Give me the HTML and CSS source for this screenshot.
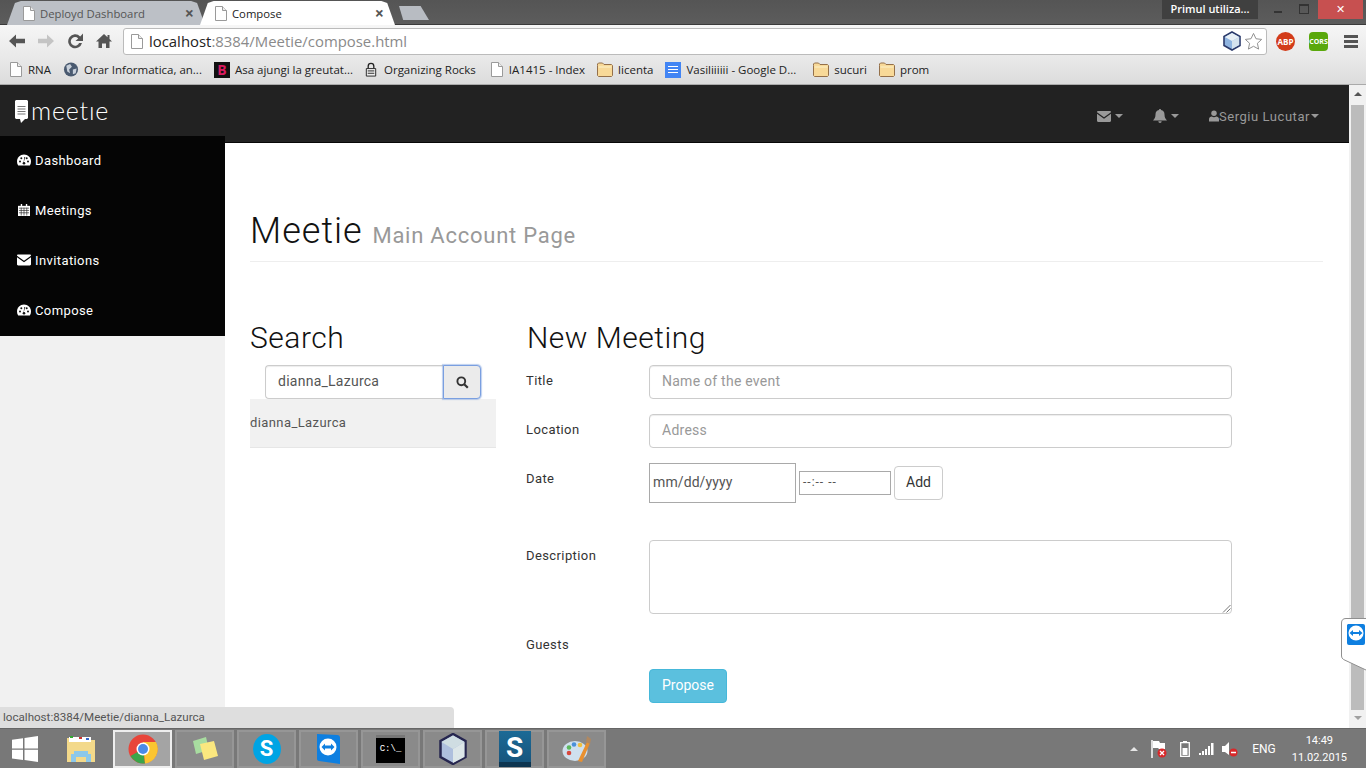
FILE: index.html
```html
<!DOCTYPE html>
<html lang="en">

<head>
    <meta charset="UTF-8">
    <title>Compose</title>
    <link rel="stylesheet" href="styles.css">
</head>

<body>
    <svg class="defs" width="0" height="0">
        <symbol id="page" viewBox="0 0 12 15">
            <path d="M.5.5h7l4 4v10H.5z" fill="#fff" stroke="#9a9a9a" />
            <path d="M7.5.5v4h4" fill="#eee" stroke="#9a9a9a" />
        </symbol>
        <symbol id="folder" viewBox="0 0 16 14">
            <path d="M.5 3V1.500l1-1h4l1.500 1.500h7.500l1 1v10l-1 1h-13l-1-1z" fill="#f8d998" stroke="#94704a" />
            <path d="M1.500 4h13v1h-13z" fill="#fdf0c8" />
        </symbol>
        <symbol id="dash" viewBox="0 0 14 12">
            <path d="M7 .5C3.100.5 0 3.600 0 7.500c0 1.500.4 2.900 1.200 4h11.600c.8-1.100 1.200-2.500 1.200-4C14 3.600 10.900.5 7 .5z" fill="#fff" />
            <g fill="#111">
                <circle cx="3" cy="7.500" r="1" />
                <circle cx="4.300" cy="4.300" r="1" />
                <circle cx="9.700" cy="4.300" r="1" />
                <circle cx="11" cy="7.500" r="1" />
                <circle cx="7" cy="9.200" r="1.300" />
                <path d="M6.500 9 7.300 3h1z" />
            </g>
        </symbol>
        <symbol id="cal" viewBox="0 0 13 13">
            <path d="M0 2h13v11H0z" fill="#fff" />
            <path d="M3 0h1.500v3H3zm5.500 0H10v3H8.500z" fill="#fff" />
            <path d="M1 4.500h11M1 7h11M1 9.500h11M3.500 4v8.500M6.500 4v8.500M9.500 4v8.500" stroke="#222" stroke-width=".7" />
        </symbol>
        <symbol id="mail" viewBox="0 0 14 11">
            <path d="M0 1.200C0 .5.500 0 1.200 0h11.600c.7 0 1.200.5 1.200 1.200L7 6.200z" />
            <path d="M0 2.800 7 7.700l7-4.900v7c0 .7-.5 1.200-1.200 1.200H1.200C.5 11 0 10.500 0 9.800z" />
        </symbol>
    </svg>

    <header class="chrome">
        <div class="tabstrip">
            <div class="tab tab-off">
                <svg class="fav"><use href="#page" /></svg>
                <span class="tab-title">Deployd Dashboard</span>
                <span class="tab-x">×</span>
            </div>
            <div class="tab tab-on">
                <svg class="fav"><use href="#page" /></svg>
                <span class="tab-title">Compose</span>
                <span class="tab-x">×</span>
            </div>
            <div class="new-tab"></div>
            <div class="win-user">Primul utiliza...</div>
            <div class="win-btns">
                <span class="win-min"></span>
                <span class="win-max"></span>
                <span class="win-close">✕</span>
            </div>
        </div>

        <div class="toolbar">
            <svg class="tool" viewBox="0 0 16 16"><path d="M0 8l7-6.500v4.300h9v4.400H7v4.300z" fill="#555" /></svg>
            <svg class="tool" viewBox="0 0 16 16"><path d="M16 8 9 1.500v4.300H0v4.400h9v4.300z" fill="#c4c4c4" /></svg>
            <svg class="tool" viewBox="0 0 16 16"><path d="M13.200 3.400A7 7 0 1 0 15 10h-2.900A4.300 4.300 0 1 1 11.200 5.400L8.500 8H16V.5z" fill="#555" /></svg>
            <svg class="tool" viewBox="0 0 16 16"><path d="M8 1 0 8.500h2.500V15H6v-4.500h4V15h3.500V8.500H16l-2.500-2.400V2h-2v2.200z" fill="#555" /></svg>
            <div class="omnibox">
                <svg class="fav"><use href="#page" /></svg>
                <span class="url"><b>localhost</b>:8384/Meetie/compose.html</span>
                <svg class="omni-cube" viewBox="0 0 20 20">
                    <path d="M10 1l8 4.500v9L10 19l-8-4.500v-9z" fill="#8fb4e0" stroke="#2b3a6b" stroke-width="1.600" />
                    <path d="M10 10l7.200-4v8l-7.200 4z" fill="#d4e2ee" />
                    <path d="M10 10 2.800 6 10 2l7.200 4z" fill="#e8f0f6" />
                </svg>
                <svg class="omni-star" viewBox="0 0 20 20"><path d="M10 1.500l2.600 5.600 6 .7-4.500 4.100 1.300 6.100L10 15l-5.400 3 1.300-6.100L1.400 7.800l6-.7z" fill="#fff" stroke="#8c8c8c" /></svg>
            </div>
            <div class="ext ext-abp">ABP</div>
            <div class="ext ext-cors">CORS</div>
            <div class="burger"><i></i><i></i><i></i></div>
        </div>

        <div class="bookmarks">
            <a class="bm"><svg class="fav"><use href="#page" /></svg>RNA</a>
            <a class="bm"><svg class="fav fav-16" viewBox="0 0 16 16"><circle cx="8" cy="8" r="7.500" fill="#4a5a70" /><path d="M3 4l4-2 2 3-3 3 1 4-3-2zM10 8l4-1-1 5-3 1z" fill="#c8d0da" /></svg>Orar Informatica, an...</a>
            <a class="bm"><span class="fav-b">B</span>Asa ajungi la greutat...</a>
            <a class="bm"><svg class="fav fav-lock" viewBox="0 0 12 16"><path d="M3 7V4.500a3 3 0 0 1 6 0V7" fill="none" stroke="#222" stroke-width="1.400" /><path d="M1 7h10v8H1z" fill="#eee" stroke="#222" /><path d="M2.500 9.500h7M2.500 12h7" stroke="#222" /></svg>Organizing Rocks</a>
            <a class="bm bm-index"><svg class="fav"><use href="#page" /></svg>IA1415 - Index</a>
            <a class="bm"><svg class="fav fav-16"><use href="#folder" /></svg>licenta</a>
            <a class="bm"><span class="fav-doc"><i></i><i></i><i></i></span>Vasiliiiiii - Google D...</a>
            <a class="bm bm-wide"><svg class="fav fav-16"><use href="#folder" /></svg>sucuri</a>
            <a class="bm"><svg class="fav fav-16"><use href="#folder" /></svg>prom</a>
        </div>
    </header>

    <div class="viewport">
        <div class="page">
            <nav class="navbar">
                <div class="brand">
                    <svg class="brand-icon" viewBox="0 0 13 23">
                        <path d="M1 0h11l1 1v17l-1 1H10l-4 4-1-4H1l-1-1V1z" fill="#fff" />
                        <path d="M2.500 6h8v1h-8zm0 2.500h8v1h-8zm0 2.500h8v1h-8zm0 2.500h8v1h-8z" fill="#777" />
                    </svg>
                    <span>meetıe</span>
                </div>
                <div class="nav-links">
                    <a class="nav-link">
                        <svg class="nav-icon"><use href="#mail" /></svg><span class="caret"></span>
                    </a>
                    <a class="nav-link">
                        <svg class="nav-icon nav-icon-bell" viewBox="0 0 14 14"><path d="M7 0c.6 0 1 .4 1 1 2.300.4 3.500 2 3.500 4.500 0 3 1 4.500 2.500 6H0c1.500-1.500 2.500-3 2.500-6C2.500 3 3.700 1.400 6 1c0-.6.4-1 1-1zM5.300 12.300h3.400a1.700 1.700 0 0 1-3.400 0z" /></svg><span class="caret"></span>
                    </a>
                    <a class="nav-link">
                        <svg class="nav-icon nav-icon-user" viewBox="0 0 11 12"><circle cx="5.500" cy="3" r="3" /><path d="M0 12V9.500C0 7.500 1.500 6.500 3 6.500c1.500 1 3.500 1 5 0 1.500 0 3 1 3 3V12z" /></svg>Sergiu Lucutar<span class="caret caret-near"></span>
                    </a>
                </div>
            </nav>

            <div class="layout">
                <aside class="sidebar">
                    <ul class="side-menu">
                        <li><svg class="side-icon"><use href="#dash" /></svg>Dashboard</li>
                        <li><svg class="side-icon"><use href="#cal" /></svg>Meetings</li>
                        <li><svg class="side-icon side-mail"><use href="#mail" /></svg>Invitations</li>
                        <li><svg class="side-icon"><use href="#dash" /></svg>Compose</li>
                    </ul>
                </aside>

                <main class="content">
                    <div class="page-header">
                        <h1>Meetie <small>Main Account Page</small></h1>
                    </div>

                    <div class="columns">
                        <section class="search-col">
                            <h2>Search</h2>
                            <div class="search-box">
                                <input class="form-control search-input" type="text" value="dianna_Lazurca">
                                <button class="search-btn" type="button">
                                    <svg viewBox="0 0 13 13" width="13" height="13"><circle cx="5.300" cy="5.300" r="3.900" fill="none" stroke="#333" stroke-width="1.900" /><path d="M8.200 8.200l3.600 3.600" stroke="#333" stroke-width="2.200" /></svg>
                                </button>
                            </div>
                            <div class="result">dianna_Lazurca</div>
                        </section>

                        <section class="form-col">
                            <h2>New Meeting</h2>
                            <form>
                                <div class="form-row">
                                    <label>Title</label>
                                    <input class="form-control" type="text" placeholder="Name of the event">
                                </div>
                                <div class="form-row">
                                    <label>Location</label>
                                    <input class="form-control" type="text" placeholder="Adress">
                                </div>
                                <div class="form-row date-row">
                                    <label>Date</label>
                                    <div class="date-box">mm/dd/yyyy</div>
                                    <div class="time-box">--:-- --</div>
                                    <button class="btn btn-add" type="button">Add</button>
                                </div>
                                <div class="form-row">
                                    <label>Description</label>
                                    <div class="textarea-box">
                                        <svg class="grip" viewBox="0 0 9 9"><path d="M1 8.500 8.500 1M4.500 8.500l4-4" stroke="#777" fill="none" /></svg>
                                    </div>
                                </div>
                                <div class="form-row guests-row">
                                    <label>Guests</label>
                                </div>
                                <div class="form-row">
                                    <label></label>
                                    <button class="btn btn-info" type="button">Propose</button>
                                </div>
                            </form>
                        </section>
                    </div>
                </main>
            </div>

            <div class="status-bubble">localhost:8384/Meetie/dianna_Lazurca</div>
        </div>

        <div class="scrollbar">
            <span class="arrow-up"></span>
            <span class="thumb"></span>
            <span class="arrow-down"></span>
        </div>

        <svg class="tv-tab" viewBox="0 0 25 53" width="25" height="53">
            <path d="M25 .5H5Q.5.500.5 5v33q0 2 2 3.500L25 52" fill="#fff" stroke="#8f8f8f" />
            <path d="M7 6h15q2 0 2 2v17q0 2-2 2H8q-2 0-2-2V7z" fill="#0e7fe0" />
            <circle cx="15" cy="15" r="7.500" fill="#fff" />
            <path d="M8.500 15l3.500-3v2h6v-2l3.500 3-3.500 3v-2h-6v2z" fill="#0e7fe0" />
        </svg>
    </div>

    <footer class="taskbar">
        <svg class="start" viewBox="0 0 26 26"><path d="M0 3.700l11-1.500v10.300H0zm12.500-1.700L26 0v12.500H12.500zM0 13.800h11v10.300L0 22.500zm12.500 0H26V26l-13.500-1.900z" fill="#fff" /></svg>
        <div class="task task-plain">
            <svg viewBox="0 0 32 30" width="32" height="30">
                <path d="M2 4h11l2 2h15v22H2z" fill="#f3d98a" />
                <path d="M4 3h22v5H4z" fill="#fff" />
                <path d="M5 2h3v2H5z" fill="#3a3" /><path d="M14 3h3v2h-3z" fill="#c33" /><path d="M21 4h3v2h-3z" fill="#36c" />
                <path d="M9 17h14v3h3v8h-5v-5H11v5H6v-8h3z" fill="#8cc8ea" />
            </svg>
        </div>
        <div class="task task-active">
            <svg viewBox="0 0 30 30" width="30" height="30">
                <circle cx="15" cy="15" r="14.500" fill="#e8453a" />
                <path d="M15 15 2.500 22A14.500 14.500 0 0 0 17 29.400z" fill="#3aa54a" />
                <path d="M15 8h13a14.500 14.500 0 0 1-11 21.400z" fill="#fbc531" />
                <circle cx="15" cy="15" r="6.500" fill="#fff" />
                <circle cx="15" cy="15" r="5" fill="#4a8be8" />
            </svg>
        </div>
        <div class="task">
            <svg viewBox="0 0 30 28" width="30" height="28">
                <path d="M3 6l13-4 3 13-13 4z" fill="#a8dca0" />
                <path d="M10 9l14-3 4 15-14 4z" fill="#fbe77f" />
            </svg>
        </div>
        <div class="task">
            <div class="skype">S</div>
        </div>
        <div class="task">
            <svg viewBox="0 0 26 32" width="26" height="32">
                <path d="M1 1l20 1c2 0 3 1 3 3v26L3 28c-1 0-2-1-2-2z" fill="#0e7fe0" />
                <circle cx="12" cy="14" r="8.500" fill="#fff" />
                <path d="M5.500 14l3.500-3.500v2h6v-2l3.500 3.500-3.500 3.500v-2H9v2z" fill="#0e7fe0" />
            </svg>
        </div>
        <div class="task">
            <div class="cmd"><span>C:\_</span></div>
        </div>
        <div class="task">
            <svg viewBox="0 0 28 32" width="28" height="32">
                <path d="M14 1l12.500 7v16L14 31 1.500 24V8z" fill="#aebfdd" stroke="#26264f" stroke-width="2.500" />
                <path d="M14 16l11.500-7v15L14 30z" fill="#dce6e8" />
                <path d="M14 16 2.500 9 14 2.500 25.500 9z" fill="#cfdde2" />
            </svg>
        </div>
        <div class="task">
            <div class="snagit">S</div>
        </div>
        <div class="task">
            <svg viewBox="0 0 30 30" width="30" height="30">
                <ellipse cx="13" cy="17" rx="12.500" ry="10" fill="#cfe0ee" />
                <circle cx="7" cy="19" r="2.300" fill="#d8483e" />
                <circle cx="7" cy="13.500" r="2.300" fill="#5cb85c" />
                <circle cx="12" cy="10.500" r="2.300" fill="#4a90d9" />
                <circle cx="18" cy="11" r="2.300" fill="#f0c040" />
                <path d="M16 27 25 8l3 1-8 19z" fill="#e89030" />
                <path d="M24 8l1-6 4 3-1 5z" fill="#b08860" />
            </svg>
        </div>

        <div class="tray">
            <span class="tray-up"></span>
            <svg class="tray-flag" viewBox="0 0 16 18" width="16" height="18">
                <path d="M1 0v18" stroke="#fff" stroke-width="1.500" />
                <path d="M2 1h6l1 2h5v6H8L7 8H2z" fill="#fff" />
                <circle cx="11" cy="13" r="4.500" fill="#d8282a" />
                <path d="M9 11l4 4m0-4l-4 4" stroke="#fff" stroke-width="1.300" />
            </svg>
            <svg class="tray-batt" viewBox="0 0 10 16" width="10" height="16">
                <path d="M3 0h4v2H3z" fill="#fff" />
                <path d="M.7 1.700h8.600v13.600H.7z" fill="none" stroke="#fff" stroke-width="1.300" />
                <path d="M2.500 7h5v7h-5z" fill="#fff" />
            </svg>
            <svg class="tray-signal" viewBox="0 0 15 12" width="15" height="12">
                <path d="M0 10h2v2H0zm3-2h2v4H3zm3-2h2v6H6zm3-3h2v9H9zm3-3h2.500v12H12z" fill="#fff" />
            </svg>
            <svg class="tray-sound" viewBox="0 0 16 16" width="16" height="16">
                <path d="M0 5h3l4-4v13l-4-3H0z" fill="#fff" />
                <circle cx="11.500" cy="11.500" r="4" fill="#d8282a" />
                <path d="M9 11.500h5" stroke="#fff" stroke-width="1.500" />
            </svg>
            <span class="tray-lang">ENG</span>
            <div class="clock">
                <span>14:49</span>
                <span>11.02.2015</span>
            </div>
        </div>
    </footer>
</body>

</html>
```

FILE: styles.css
```css
* {
    box-sizing: border-box;
}

html,
body {
    margin: 0;
    height: 100%;
    overflow: hidden;
}

body {
    width: 1366px;
    height: 768px;
    display: flex;
    flex-direction: column;
    font-family: Roboto, sans-serif;
    font-size: 13px;
    letter-spacing: .4px;
    color: #333;
}

.defs {
    position: absolute;
}

/* browser frame */
.chrome {
    height: 85px;
    flex: none;
    font-family: "Open Sans", sans-serif;
    letter-spacing: 0;
}

.tabstrip {
    height: 25px;
    display: flex;
    background: linear-gradient(#555, #5c5c5c);
    border-bottom: 1px solid #3a3a3a;
    padding-left: 7px;
}

.tab {
    width: 198px;
    height: 24px;
    margin-top: 1px;
    margin-right: -5px;
    display: flex;
    align-items: center;
    padding: 0 11px 0 16px;
    font-size: 11.300px;
    clip-path: polygon(0 100%, 4% 8%, 7% 0, 93% 0, 96% 8%, 100% 100%);
}

.tab .fav {
    margin-right: 5px;
}

.tab-off {
    background: #bcc0c6;
    color: #555;
}

.tab-on {
    background: #fff;
    color: #222;
    width: 195px;
    padding-left: 15px;
}

.tab-title {
    flex: 1;
}

.tab-x {
    font-size: 16px;
    font-weight: 700;
    color: #555;
}

.new-tab {
    width: 30px;
    height: 14px;
    margin: 6px 0 0 9px;
    background: #b8bcc2;
    clip-path: polygon(0 0, 72% 0, 100% 100%, 14% 100%);
}

.win-user {
    margin-left: auto;
    width: 96px;
    height: 19px;
    background: #404040;
    color: #fff;
    font-size: 11px;
    font-weight: 600;
    text-align: center;
    line-height: 18px;
}

.win-btns {
    display: flex;
    width: 108px;
    padding-left: 16px;
}

.win-min {
    width: 8px;
    height: 2px;
    margin: 11px 17px 0 0;
    background: #333;
}

.win-max {
    width: 10px;
    height: 10px;
    margin: 4px 9px 0 0;
    border: 1px solid #333;
    border-top-width: 2px;
}

.win-close {
    width: 45px;
    height: 19px;
    background: #c75050;
    color: #fff;
    text-align: center;
    font-size: 11px;
    line-height: 18px;
}

.toolbar {
    height: 32px;
    display: flex;
    align-items: center;
    padding-left: 9px;
    background: linear-gradient(#f6f6f6, #e9e9e9);
}

.tool {
    width: 16px;
    height: 16px;
    margin-right: 13px;
    flex: none;
}

.omnibox {
    width: 1144px;
    height: 27px;
    margin-left: -2px;
    display: flex;
    align-items: center;
    padding: 0 3px 0 7px;
    background: #fff;
    border: 1px solid #bbb;
    border-radius: 3px;
}

.url {
    flex: 1;
    font-size: 14.900px;
    color: #8a8a8a;
}

.url b {
    font-weight: 400;
    color: #222;
}

.omni-cube {
    width: 20px;
    height: 20px;
}

.omni-star {
    width: 19px;
    height: 19px;
    margin-left: 2px;
}

.ext {
    width: 19px;
    height: 19px;
    margin-left: 9px;
    color: #fff;
    font-size: 8px;
    font-weight: 700;
    text-align: center;
    line-height: 19px;
    flex: none;
}

.ext-abp {
    background: #d33c1a;
    border-radius: 50%;
}

.ext-cors {
    background: #5aa80c;
    border-radius: 4px;
    font-size: 7px;
    margin-left: 14px;
}

.burger {
    width: 14px;
    margin-left: 16px;
}

.burger i {
    display: block;
    height: 3px;
    margin: 2px 0;
    background: #555;
}

.bookmarks {
    height: 28px;
    display: flex;
    align-items: center;
    gap: 12px;
    padding: 0 0 2px 10px;
    background: linear-gradient(#e9e9e9, #dcdcdc);
    border-bottom: 1px solid #aaa;
    font-size: 11.500px;
    color: #222;
}

.bm {
    display: flex;
    align-items: center;
    white-space: nowrap;
}

.bm-index {
    margin-left: 3px;
}

.bm-wide {
    margin-left: 5px;
}

.fav {
    width: 12px;
    height: 15px;
    margin-right: 6px;
    flex: none;
}

.fav-16 {
    width: 16px;
    height: 15px;
    margin-right: 5px;
}

.fav-lock {
    margin-right: 7px;
}

.fav-b {
    width: 16px;
    height: 16px;
    margin-right: 5px;
    background: #111;
    color: #d81b60;
    font-size: 14px;
    font-weight: 700;
    text-align: center;
    line-height: 16px;
}

.fav-doc {
    width: 16px;
    height: 16px;
    margin-right: 5px;
    padding: 4px 3px;
    background: #4285f4;
}

.fav-doc i {
    display: block;
    height: 1px;
    margin-bottom: 2px;
    background: #fff;
}

/* page in the viewport */
.viewport {
    position: relative;
    flex: 1;
    display: flex;
    min-height: 0;
}

.page {
    position: relative;
    flex: 1;
    background: #fff;
    overflow: hidden;
}

.navbar {
    height: 58px;
    display: flex;
    justify-content: space-between;
    background: #222;
    border-bottom: 1px solid #080808;
}

.brand {
    display: flex;
    align-items: center;
    height: 49px;
    padding-left: 15px;
    color: #fff;
    font-family: "Lato", sans-serif;
    font-size: 25px;
    font-weight: 300;
    letter-spacing: .8px;
}

.brand-icon {
    width: 13px;
    height: 23px;
    margin-right: 3px;
    margin-top: 3px;
}

.nav-links {
    display: flex;
    padding-right: 30px;
    gap: 30px;
    align-items: center;
    padding-top: 5px;
    color: #999;
    letter-spacing: .55px;
}

.nav-link {
    display: flex;
    align-items: center;
}

.nav-icon {
    width: 14px;
    height: 11px;
    fill: #999;
}

.nav-icon-bell {
    height: 14px;
}

.nav-icon-user {
    width: 10px;
    height: 12px;
}

.caret {
    width: 0;
    height: 0;
    margin-left: 4px;
    border-top: 4px solid #999;
    border-left: 4px solid transparent;
    border-right: 4px solid transparent;
}

.caret-near {
    margin-left: 1px;
}

.layout {
    display: flex;
    height: 585px;
}

.sidebar {
    width: 225px;
    flex: none;
    background: #f1f1f1;
}

.side-menu {
    list-style: none;
    margin: -7px 0 0;
    padding: 0;
    background: #050505;
    color: #fff;
    position: relative;
}

.side-menu li {
    height: 50px;
    display: flex;
    align-items: center;
    padding: 0 0 2px 17px;
}

.side-icon {
    width: 14px;
    height: 12px;
    margin-right: 4px;
    fill: #fff;
}

.content {
    flex: 1;
    padding: 0 26px 0 25px;
}

.page-header {
    height: 119px;
    padding-top: 63px;
    border-bottom: 1px solid #eee;
}

h1 {
    margin: 0;
    font-size: 36px;
    font-weight: 300;
    letter-spacing: 1px;
    line-height: 50px;
    color: #111;
}

h1 small {
    font-size: 22px;
    font-weight: 400;
    letter-spacing: .75px;
    color: #999;
}

h2 {
    margin: 0;
    height: 44px;
    font-size: 30px;
    font-weight: 300;
    letter-spacing: .5px;
    line-height: 34px;
    color: #111;
}

.columns {
    display: flex;
    gap: 31px;
    padding-top: 59px;
}

.search-col {
    width: 246px;
}

.search-box {
    display: flex;
    padding-left: 15px;
    width: 231px;
}

.form-control {
    display: block;
    width: 583px;
    height: 34px;
    padding: 4px 12px 6px;
    font: inherit;
    font-size: 14px;
    letter-spacing: .25px;
    color: #555;
    background: #fff;
    border: 1px solid #ccc;
    border-radius: 4px;
    box-shadow: inset 0 1px 1px rgba(0, 0, 0, .075);
}

.form-control::placeholder {
    color: #999;
}

.search-input {
    width: 178px;
    border-radius: 4px 0 0 4px;
    border-right: 0;
}

.search-btn {
    width: 38px;
    height: 34px;
    padding: 0;
    display: flex;
    align-items: center;
    justify-content: center;
    background: #ebebeb;
    border: 1px solid #7a9fe0;
    border-radius: 0 4px 4px 0;
    box-shadow: 0 0 1px 1px rgba(122, 159, 224, .5);
}

.result {
    height: 49px;
    padding-top: 16px;
    background: #f1f1f1;
    border-bottom: 1px solid #e6e6e6;
    color: #555;
}

.form-col {
    width: 705px;
}

.form-row {
    display: flex;
    margin-bottom: 15px;
}

.form-row label {
    width: 122px;
    margin-left: -1px;
    margin-right: 1px;
    padding-top: 8px;
    flex: none;
}

.date-row {
    align-items: center;
    height: 40px;
    margin-bottom: 37px;
}

.date-row label {
    align-self: flex-start;
}

.date-box {
    width: 147px;
    height: 40px;
    padding-left: 3px;
    border: 1px solid #a9a9a9;
    font-size: 14px;
    letter-spacing: .1px;
    line-height: 36px;
    color: #555;
}

.time-box {
    width: 92px;
    height: 24px;
    margin-left: 3px;
    padding-left: 3px;
    border: 1px solid #a9a9a9;
    font-size: 12px;
    letter-spacing: 1px;
    line-height: 21px;
    color: #555;
}

.btn {
    height: 34px;
    margin-left: 3px;
    padding: 0 0 2px;
    font: inherit;
    font-size: 14px;
    color: #333;
    background: #fff;
    border: 1px solid #ccc;
    border-radius: 4px;
}

.btn-add {
    width: 49px;
}

.btn-info {
    width: 78px;
    margin-left: 0;
    color: #fff;
    background: #5bc0de;
    border-color: #46b8da;
}

.textarea-box {
    position: relative;
    width: 583px;
    height: 74px;
    background: #fff;
    border: 1px solid #ccc;
    border-radius: 4px;
}

.grip {
    position: absolute;
    right: 0;
    bottom: 0;
    width: 9px;
    height: 9px;
}

.guests-row {
    height: 25px;
}

.status-bubble {
    position: absolute;
    left: 0;
    bottom: 0;
    width: 454px;
    height: 21px;
    padding-left: 3px;
    background: #dedede;
    border-radius: 0 4px 0 0;
    font-size: 11.600px;
    letter-spacing: 0;
    line-height: 21px;
    color: #555;
}

/* the TeamViewer tab sits over the scrollbar */
.tv-tab {
    position: absolute;
    right: 0;
    top: 533px;
}

.scrollbar {
    width: 17px;
    flex: none;
    display: flex;
    flex-direction: column;
    align-items: center;
    background: #f1f1f1;
}

.arrow-up {
    margin-top: 7px;
    border-bottom: 4px solid #555;
    border-left: 4px solid transparent;
    border-right: 4px solid transparent;
}

.thumb {
    width: 13px;
    height: 605px;
    margin-top: 9px;
    background: #bcbcbc;
}

.arrow-down {
    margin-top: 6px;
    border-top: 4px solid #a0a0a0;
    border-left: 4px solid transparent;
    border-right: 4px solid transparent;
}

/* windows taskbar */
.taskbar {
    height: 40px;
    flex: none;
    display: flex;
    align-items: center;
    gap: 3px;
    background: #787878;
    border-top: 1px solid #666;
    letter-spacing: 0;
    color: #fff;
}

.start {
    width: 26px;
    height: 26px;
    margin: 0 10px 0 12px;
}

.task {
    width: 59px;
    height: 38px;
    display: flex;
    align-items: center;
    justify-content: center;
    border: 2px solid #969696;
    background: #8a8a8a;
}

.task-plain {
    border-color: transparent;
    background: none;
}

.task-active {
    border-color: #eee;
    background: #a4a4a4;
}

.skype {
    width: 28px;
    height: 30px;
    background: #00a4e4;
    border-radius: 50%;
    font-size: 22px;
    font-weight: 700;
    text-align: center;
    line-height: 29px;
}

.cmd {
    width: 29px;
    height: 28px;
    padding-top: 6px;
    background: #000;
    border-top: 3px solid #777;
    font-family: "Liberation Mono", monospace;
    font-size: 9px;
    line-height: 10px;
    text-align: center;
}

.snagit {
    width: 32px;
    height: 36px;
    background: linear-gradient(#1c6a96, #17567e 85%, #0d3550 85%);
    font-size: 28px;
    font-weight: 700;
    text-align: center;
    line-height: 34px;
}

.tray {
    flex: 1;
    display: flex;
    align-items: center;
    justify-content: flex-end;
    font-size: 12px;
}

.tray-up {
    margin-right: 13px;
    border-bottom: 4px solid #e6e6e6;
    border-left: 4px solid transparent;
    border-right: 4px solid transparent;
}

.tray-flag {
    margin-right: 13px;
}

.tray-batt {
    margin-right: 9px;
}

.tray-signal {
    margin-right: 8px;
}

.tray-sound {
    margin-right: 14px;
}

.tray-lang {
    margin-right: 16px;
}

.clock {
    display: flex;
    flex-direction: column;
    align-items: center;
    margin-right: 19px;
    font-size: 11px;
    line-height: 17px;
}
```
